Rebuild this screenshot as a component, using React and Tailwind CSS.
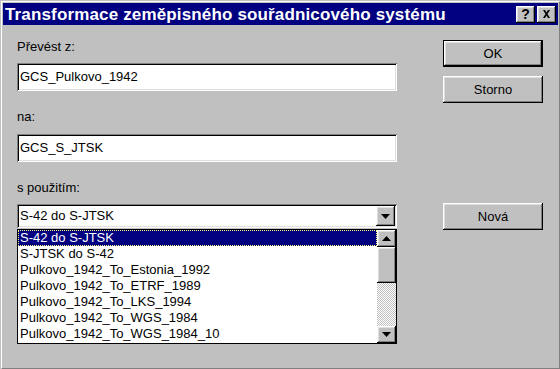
const raised =
  "bg-[#c0c0c0] shadow-[inset_-1px_-1px_#000,inset_1px_1px_#fff,inset_-2px_-2px_#808080,inset_2px_2px_#dfdfdf]";
const sunken =
  "shadow-[inset_1px_1px_#808080,inset_-1px_-1px_#fff,inset_2px_2px_#000,inset_-2px_-2px_#dfdfdf]";

function Arrow({ up }) {
  return (
    <svg width="9" height="5" viewBox="0 0 9 5" className={up ? "rotate-180" : ""}>
      <path d="M0 0h9L4.5 5z" fill="#000" />
    </svg>
  );
}

function Field({ value }) {
  return (
    <div className={`h-[28px] bg-white ${sunken} flex items-center pl-[3px] text-[13px]`}>
      {value}
    </div>
  );
}

function Button({ children, def, className = "" }) {
  return (
    <div className={`${className} w-[100px] ${def ? "border border-black" : ""}`}>
      <div
        className={`${raised} flex items-center justify-center text-[13px] ${
          def ? "h-[25px]" : "h-[27px]"
        }`}
      >
        {children}
      </div>
    </div>
  );
}

const items = [
  "S-42 do S-JTSK",
  "S-JTSK do S-42",
  "Pulkovo_1942_To_Estonia_1992",
  "Pulkovo_1942_To_ETRF_1989",
  "Pulkovo_1942_To_LKS_1994",
  "Pulkovo_1942_To_WGS_1984",
  "Pulkovo_1942_To_WGS_1984_10",
];

export default function App() {
  return (
    <div className="w-[560px] h-[369px] bg-[#c0c0c0] border-t border-l border-[#c0c0c0] border-r-black border-b-black font-['Liberation_Sans',Arial,sans-serif] text-black overflow-hidden">
      <div className="h-full border-t border-l border-white border-r border-b border-r-[#808080] border-b-[#808080] p-px flex flex-col">
        {/* title bar */}
        <div className="h-[22px] bg-[#000080] flex items-center pl-[2px] pr-[2px]">
          <span className="text-white font-bold text-[17px] tracking-[0.15px] leading-none flex-1 whitespace-nowrap">
            Transformace zeměpisného souřadnicového systému
          </span>
          <div className={`w-[19px] h-[17px] ${raised} flex items-center justify-center font-bold text-[14px] leading-none`}>
            ?
          </div>
          <div className={`ml-[2px] w-[19px] h-[17px] ${raised} flex items-center justify-center`}>
            <svg width="9" height="8" viewBox="0 0 9 8">
              <path d="M1 0h2l1.5 2.5L6 0h2L5.5 4 8 8H6L4.5 5.5 3 8H1l2.5-4z" fill="#000" />
            </svg>
          </div>
        </div>

        {/* body */}
        <div className="flex flex-1">
          <div className="ml-[14px] w-[380px] flex flex-col text-[13px]">
            <div className="mt-[14px] h-[16px] leading-[16px]">Převést z:</div>
            <div className="mt-[8px]">
              <Field value="GCS_Pulkovo_1942" />
            </div>
            <div className="mt-[18px] h-[16px] leading-[16px]">na:</div>
            <div className="mt-[9px]">
              <Field value="GCS_S_JTSK" />
            </div>
            <div className="mt-[18px] h-[16px] leading-[16px]">s použitím:</div>
            <div className={`mt-[8px] h-[24px] bg-white ${sunken} flex items-center pl-[3px] pr-[2px]`}>
              <span className="flex-1">S-42 do S-JTSK</span>
              <div className={`w-[19px] h-[20px] ${raised} flex items-center justify-center`}>
                <Arrow />
              </div>
            </div>
            <div className="mt-px h-[115px] border border-black bg-white flex">
              <div className="flex-1 flex flex-col">
                {items.map((t, i) => (
                  <div
                    key={t}
                    className={`h-[16px] leading-[14px] pl-px whitespace-nowrap ${
                      i === 0
                        ? "bg-[#000080] text-white border border-dotted border-[#ffff80]"
                        : "border border-transparent"
                    }`}
                  >
                    {t}
                  </div>
                ))}
              </div>
              <div className="w-[19px] flex flex-col">
                <div className={`h-[17px] ${raised} flex items-center justify-center`}>
                  <Arrow up />
                </div>
                <div className={`h-[36px] ${raised}`} />
                <div className="flex-1 bg-[repeating-conic-gradient(#fff_0_25%,#c0c0c0_0_50%)] bg-[length:2px_2px]" />
                <div className={`h-[17px] ${raised} flex items-center justify-center`}>
                  <Arrow />
                </div>
              </div>
            </div>
          </div>

          <div className="ml-[46px] flex flex-col">
            <Button def className="mt-[15px]">OK</Button>
            <Button className="mt-[9px]">Storno</Button>
            <Button className="mt-[100px]">Nová</Button>
          </div>
        </div>
      </div>
    </div>
  );
}
